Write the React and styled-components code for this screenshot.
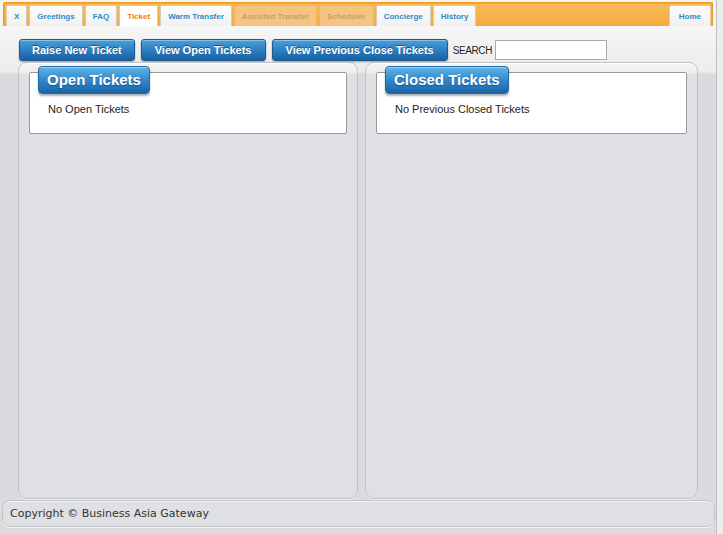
import React from "react";
import styled, { createGlobalStyle } from "styled-components";

const GlobalStyle = createGlobalStyle`
  html, body {
    margin: 0;
    padding: 0;
    background: #eeeeee;
    font-family: "Liberation Sans", Arial, sans-serif;
  }
`;

const Page = styled.div`
  display: flex;
  width: 723px;
  height: 534px;
  overflow: hidden;
`;

const Frame = styled.div`
  width: 716px;
  display: flex;
  flex-direction: column;
  background: #dadbde;
  border-right: 1px solid #bfc0c2;
`;

const Gutter = styled.div`
  flex: 1;
  background: #ededed;
`;

const TopStrip = styled.div`
  background: #f5f5f5;
  padding: 2px 3px 0 3px;
`;

const TabBar = styled.div`
  display: flex;
  gap: 2px;
  height: 21px;
  padding: 2px 1px 0 2px;
  border: 1px solid #ef9b1f;
  border-bottom: none;
  border-radius: 2px 2px 0 0;
  background: linear-gradient(#f7bb5a, #f4ab3f);
  box-shadow: inset 0 0 0 1px #f7a933;
`;

const Tab = styled.div`
  display: flex;
  align-items: center;
  padding: 0 ${(p) => (p.push ? 9 : 7)}px;
  height: 20px;
  font-size: 8px;
  font-weight: bold;
  border: 1px solid ${(p) => (p.disabled ? "#f1b565" : "#d6cbb8")};
  border-bottom: none;
  border-radius: 2px 2px 0 0;
  color: ${(p) => (p.active ? "#f07b1d" : p.disabled ? "#c4a26c" : "#2b8bc9")};
  background: ${(p) =>
    p.active
      ? "#ffffff"
      : p.disabled
      ? "#f6c47f"
      : "linear-gradient(#fcfcfc, #f1f1f1)"};
  margin-left: ${(p) => (p.push ? "auto" : "0")};
`;

const Main = styled.div`
  flex: 1;
  display: flex;
  flex-direction: column;
  background: linear-gradient(#f6f6f6 0px, #ececec 46px, #dadbde 48px);
`;

const Toolbar = styled.div`
  display: flex;
  align-items: center;
  gap: 6px;
  padding: 13px 0 0 19px;
  height: 22px;
`;

const ActionButton = styled.button`
  height: 22px;
  padding: 0 ${(p) => p.pad || 11}px;
  font-family: "Liberation Sans", Arial, sans-serif;
  font-size: 11px;
  font-weight: bold;
  color: #ffffff;
  text-shadow: 0 -1px 0 rgba(0, 40, 80, 0.6);
  border: 1px solid #1b5b92;
  border-radius: 3px;
  background: linear-gradient(#4aa0da, #2a7cc0 55%, #1a5fa0);
  box-shadow: inset 0 1px 0 rgba(255, 255, 255, 0.35),
    0 1px 2px rgba(0, 0, 0, 0.35);
  cursor: pointer;
`;

const SearchLabel = styled.span`
  font-size: 10px;
  letter-spacing: -0.4px;
  color: #222;
  margin-left: -1px;
`;

const SearchInput = styled.input`
  width: 108px;
  height: 16px;
  border: 1px solid #a9a9a9;
  background: #fff;
  padding: 1px;
  margin-left: -3px;
`;

const Columns = styled.div`
  display: grid;
  grid-template-columns: 340px 333px;
  gap: 7px;
  padding: 1px 0 0 18px;
`;

const Panel = styled.div`
  height: 437px;
  box-sizing: border-box;
  border: 1px solid #c2c3c6;
  border-radius: 9px;
  background: linear-gradient(#f4f4f4 0px, #eeeeee 9px, #dfe0e3 12px);
  box-shadow: 0 1px 0 #f3f3f3, inset 0 1px 0 #ffffff;
  padding: 9px 10px 0 10px;
`;

const Box = styled.div`
  height: 62px;
  box-sizing: border-box;
  border: 1px solid #9a9a9a;
  border-radius: 2px;
  background: #ffffff;
`;

const Badge = styled.div`
  width: fit-content;
  margin: -7px 0 0 8px;
  height: 26px;
  line-height: 25px;
  padding: 0 8px;
  font-size: 15px;
  font-weight: bold;
  color: #ffffff;
  text-shadow: 0 1px 1px rgba(0, 50, 100, 0.5);
  border: 1px solid #1f6aa6;
  border-radius: 4px;
  background: linear-gradient(#62b4e6, #3288cb 50%, #1964a6);
  box-shadow: inset 0 1px 0 rgba(255, 255, 255, 0.4),
    0 2px 2px rgba(0, 0, 0, 0.3);
`;

const Empty = styled.div`
  font-size: 11px;
  color: #222;
  padding: 9px 0 0 18px;
`;

const Footer = styled.div`
  margin: 1px 0 0 2px;
  width: 713px;
  height: 28px;
  box-sizing: border-box;
  display: flex;
  align-items: center;
  padding-left: 7px;
  font-family: "DejaVu Sans", Verdana, sans-serif;
  font-size: 11px;
  color: #333;
  border: 1px solid #c2c3c6;
  border-radius: 8px;
  background: #dfe0e3;
  box-shadow: 0 1px 0 #f3f3f3, inset 0 1px 0 #f4f4f4;
`;

const tabs = [
  { label: "X" },
  { label: "Greetings" },
  { label: "FAQ" },
  { label: "Ticket", active: true },
  { label: "Warm Transfer" },
  { label: "Assisted Transfer", disabled: true },
  { label: "Scheduler", disabled: true },
  { label: "Concierge" },
  { label: "History" },
  { label: "Home", push: true },
];

export default function App() {
  return (
    <>
      <GlobalStyle />
      <Page>
        <Frame>
          <TopStrip>
            <TabBar>
              {tabs.map((t) => (
                <Tab
                  key={t.label}
                  active={t.active}
                  disabled={t.disabled}
                  push={t.push}
                >
                  {t.label}
                </Tab>
              ))}
            </TabBar>
          </TopStrip>
          <Main>
            <Toolbar>
              <ActionButton pad={12}>Raise New Ticket</ActionButton>
              <ActionButton pad={13}>View Open Tickets</ActionButton>
              <ActionButton pad={13}>View Previous Close Tickets</ActionButton>
              <SearchLabel>SEARCH</SearchLabel>
              <SearchInput type="text" />
            </Toolbar>
            <Columns>
              <Panel>
                <Box>
                  <Badge>Open Tickets</Badge>
                  <Empty>No Open Tickets</Empty>
                </Box>
              </Panel>
              <Panel>
                <Box>
                  <Badge>Closed Tickets</Badge>
                  <Empty>No Previous Closed Tickets</Empty>
                </Box>
              </Panel>
            </Columns>
          </Main>
          <Footer>Copyright © Business Asia Gateway</Footer>
          <div style={{ height: 7 }} />
        </Frame>
        <Gutter />
      </Page>
    </>
  );
}
